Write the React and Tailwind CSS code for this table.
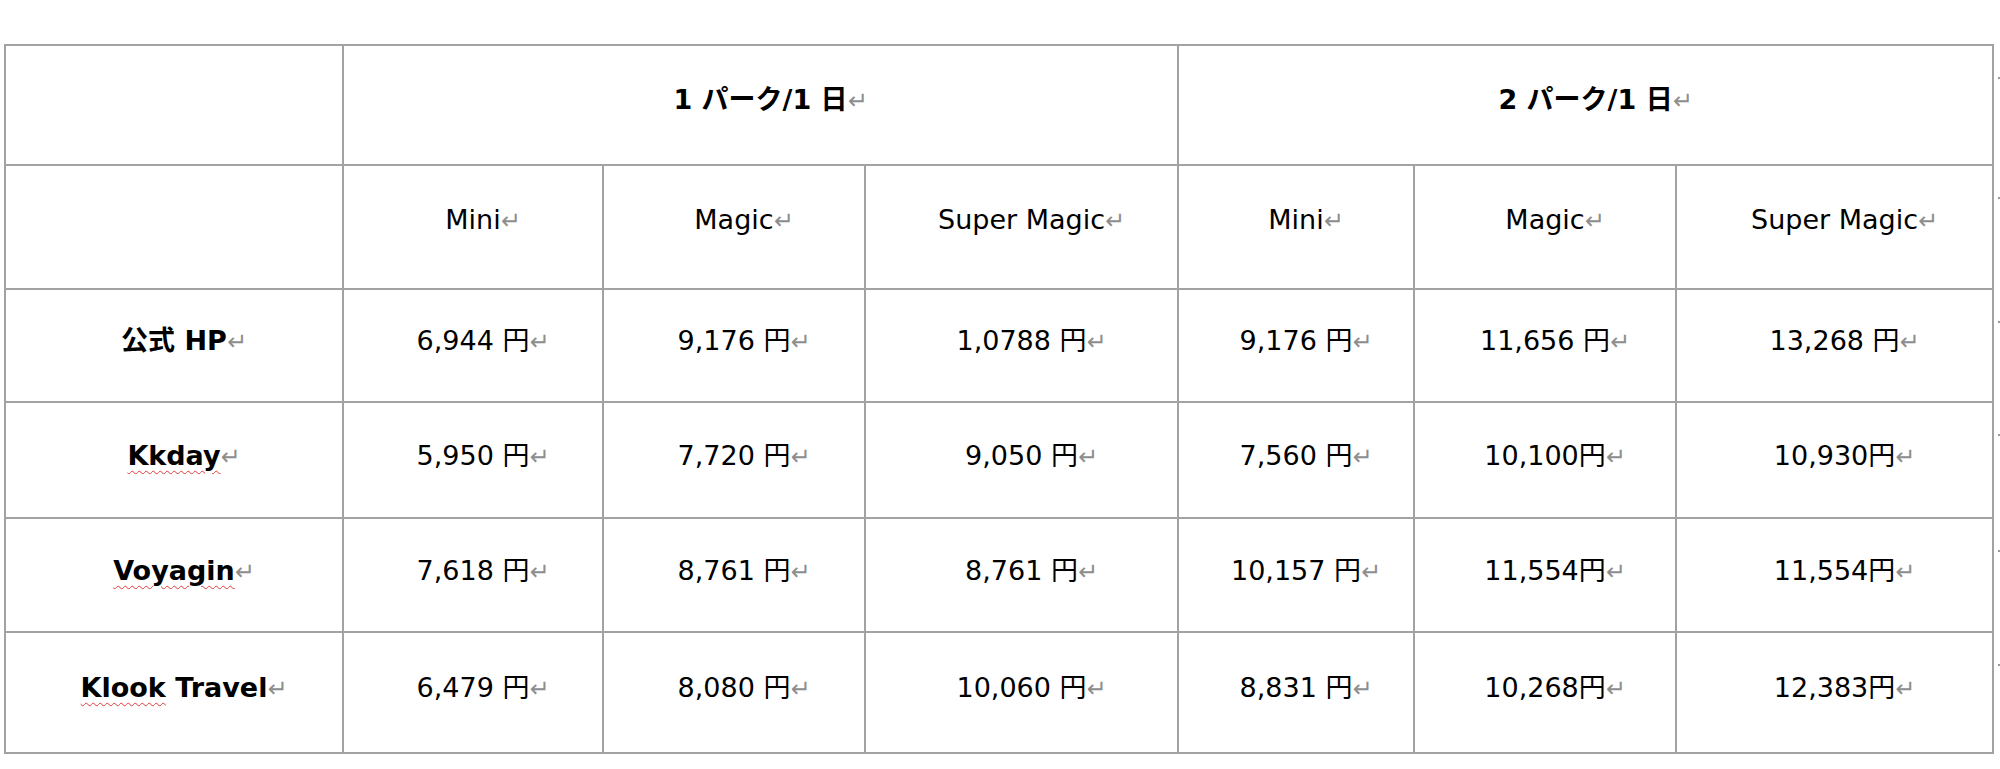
import React from "react";

const Mark = () => (
  <span className="inline-block w-[19px] mr-[-19px] text-left font-['DejaVu_Sans',sans-serif] text-[24px] text-[#8e8e8e] font-normal align-baseline">↵</span>
);

const rows = [
  { label: "公式 HP", wavy: null, vals: ["6,944 円", "9,176 円", "1,0788 円", "9,176 円", "11,656 円", "13,268 円"], h: "h-[113px]" },
  { label: "Kkday", wavy: "Kkday", vals: ["5,950 円", "7,720 円", "9,050 円", "7,560 円", "10,100円", "10,930円"], h: "h-[116px]" },
  { label: "Voyagin", wavy: "Voyagin", vals: ["7,618 円", "8,761 円", "8,761 円", "10,157 円", "11,554円", "11,554円"], h: "h-[114px]" },
  { label: "Klook Travel", wavy: "Klook", vals: ["6,479 円", "8,080 円", "10,060 円", "8,831 円", "10,268円", "12,383円"], h: "h-[121px]" },
];

const cell = "border-2 border-[#a2a2a2] text-center align-middle px-0 pt-0";

const dotRows = ["h-[120px]", "h-[124px]", "h-[113px]", "h-[116px]", "h-[114px]", "h-[121px]"];

export default function App() {
  return (
    <div className="bg-white w-[2000px] h-[769px] overflow-hidden pt-[44px] pl-[4px] font-['DejaVu_Sans','Noto_Sans_CJK_JP',sans-serif] text-[27px] text-black leading-none">
      <div className="flex">
        <table className="border-collapse table-fixed w-[1988px] shrink-0">
          <colgroup>
            <col className="w-[338px]" />
            <col className="w-[260px]" />
            <col className="w-[262px]" />
            <col className="w-[313px]" />
            <col className="w-[236px]" />
            <col className="w-[262px]" />
            <col className="w-[317px]" />
          </colgroup>
          <tbody>
            <tr className="h-[120px]">
              <td className={cell + " pb-0"}></td>
              <td colSpan={3} className={cell + " pb-[12px] font-bold"}>
                1 パーク/1 日<Mark />
              </td>
              <td colSpan={3} className={cell + " pb-[12px] font-bold"}>
                2 パーク/1 日<Mark />
              </td>
            </tr>
            <tr className="h-[124px]">
              <td className={cell + " pb-0"}></td>
              {["Mini", "Magic", "Super Magic", "Mini", "Magic", "Super Magic"].map((t, i) => (
                <td key={i} className={cell + " pb-[16px]"}>
                  {t}<Mark />
                </td>
              ))}
            </tr>
            {rows.map((r, ri) => (
              <tr key={ri} className={r.h}>
                <td className={cell + " pb-[10px] font-bold"}>
                  {r.wavy ? (
                    <>
                      <span className="underline decoration-wavy decoration-[#e23b3b] decoration-1 underline-offset-[5px]">{r.wavy}</span>
                      {r.label.slice(r.wavy.length)}
                    </>
                  ) : (
                    r.label
                  )}
                  <Mark />
                </td>
                {r.vals.map((v, i) => (
                  <td key={i} className={cell + " pb-[10px]"}>
                    {v}<Mark />
                  </td>
                ))}
              </tr>
            ))}
          </tbody>
        </table>
        <div className="flex flex-col pl-[4px]">
          {dotRows.map((h, i) => (
            <div key={i} className={h + " pt-[33px]"}>
              <div className="w-[2px] h-[2px] bg-[#9a9a9a]" />
            </div>
          ))}
        </div>
      </div>
    </div>
  );
}
